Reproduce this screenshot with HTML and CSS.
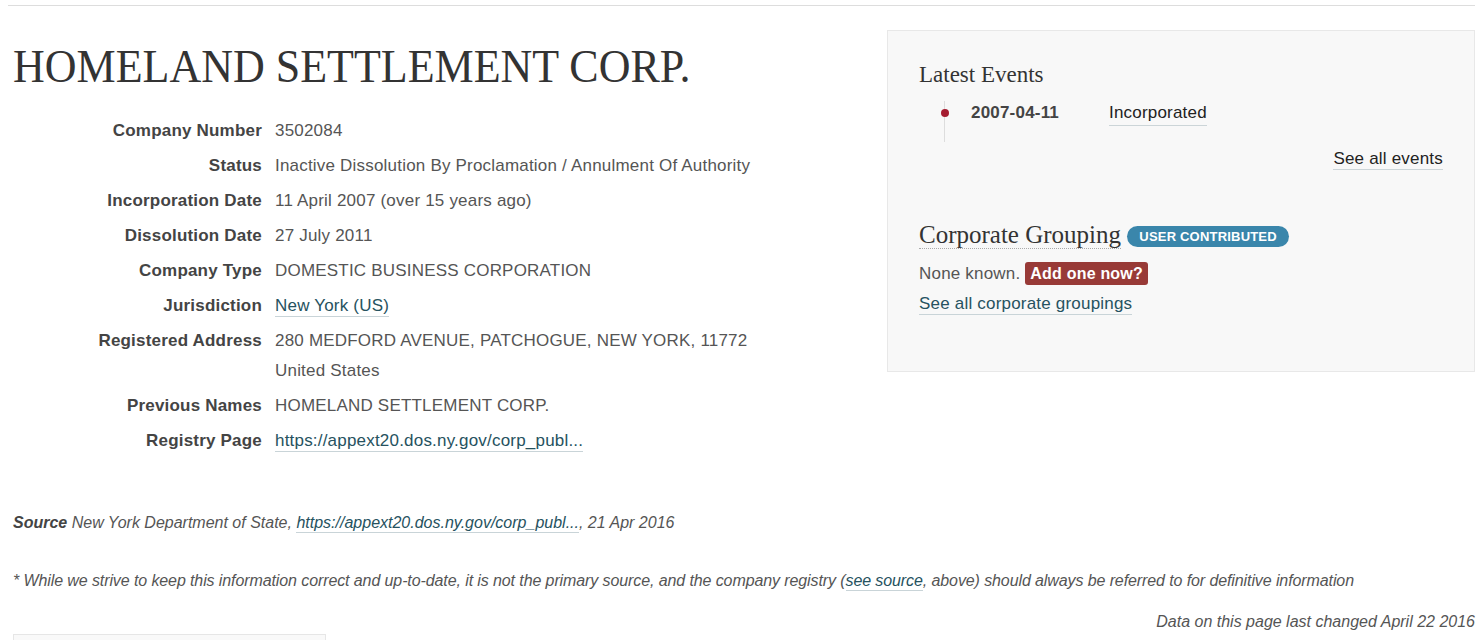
FILE: index.html
```html
<!DOCTYPE html>
<html>
<head>
<meta charset="utf-8">
<link rel="stylesheet" href="styles.css">
</head>
<body>
<div class="page">
  <div class="topbar"></div>
  <div class="main">
    <div class="left">
      <h1 class="title">HOMELAND SETTLEMENT CORP.</h1>
      <dl class="attrs">
        <dt>Company Number</dt><dd>3502084</dd>
        <dt>Status</dt><dd>Inactive Dissolution By Proclamation / Annulment Of Authority</dd>
        <dt>Incorporation Date</dt><dd>11 April 2007 (over 15 years ago)</dd>
        <dt>Dissolution Date</dt><dd>27 July 2011</dd>
        <dt>Company Type</dt><dd>DOMESTIC BUSINESS CORPORATION</dd>
        <dt>Jurisdiction</dt><dd><a class="lnk" href="#">New York (US)</a></dd>
        <dt>Registered Address</dt><dd>280 MEDFORD AVENUE, PATCHOGUE, NEW YORK, 11772<br>United States</dd>
        <dt>Previous Names</dt><dd>HOMELAND SETTLEMENT CORP.</dd>
        <dt>Registry Page</dt><dd><a class="lnk" href="#">https://appext20.dos.ny.gov/corp_publ...</a></dd>
      </dl>
    </div>
    <div class="sidebar">
      <h3 class="side-title">Latest Events</h3>
      <ul class="events">
        <li class="event"><span class="dot"></span><span class="ev-date">2007-04-11</span><a class="ev-desc" href="#">Incorporated</a></li>
      </ul>
      <div class="see-all"><a class="dark-lnk" href="#">See all events</a></div>
      <h3 class="side-title grouping"><span class="dotted">Corporate Grouping</span> <span class="badge-blue">USER CONTRIBUTED</span></h3>
      <p class="none">None known. <a class="badge-red" href="#">Add one now?</a></p>
      <p class="groupings"><a class="lnk" href="#">See all corporate groupings</a></p>
    </div>
  </div>
  <p class="source"><b>Source</b> New York Department of State, <a class="lnk" href="#">https://appext20.dos.ny.gov/corp_publ...</a>, 21 Apr 2016</p>
  <p class="disclaimer">* While we strive to keep this information correct and up-to-date, it is not the primary source, and the company registry (<a class="lnk" href="#">see source</a>, above) should always be referred to for definitive information</p>
  <p class="changed">Data on this page last changed April 22 2016</p>
  <div class="bottom-box"></div>
</div>
</body>
</html>
```

FILE: styles.css
```css
html, body {
  margin: 0;
  padding: 0;
  background: #fff;
}
body {
  font-family: "Liberation Sans", Arial, sans-serif;
  font-size: 17px;
  letter-spacing: 0.2px;
  color: #555;
  overflow: hidden;
  height: 640px;
}
.page {
  margin: 0 8px;
}
.topbar {
  height: 5px;
  border-bottom: 1px solid #ddd;
}
.main {
  display: flex;
  align-items: flex-start;
  justify-content: space-between;
}
.left {
  padding-left: 5px;
}
.title {
  font-family: "Liberation Serif", "Times New Roman", serif;
  font-weight: normal;
  font-size: 47px;
  line-height: 56px;
  letter-spacing: 0;
  white-space: nowrap;
  color: #333;
  margin: 32px 0 0 0;
  transform: scaleX(0.936);
  transform-origin: left center;
}
.attrs {
  display: grid;
  grid-template-columns: 249px auto;
  column-gap: 13px;
  row-gap: 5px;
  margin: 22px 0 0 0;
  line-height: 30px;
}
.attrs dt {
  text-align: right;
  font-weight: bold;
  color: #444;
}
.attrs dd {
  margin: 0;
  color: #555;
}
.lnk {
  color: #265260;
  text-decoration: none;
  border-bottom: 1px solid #c9d4d8;
  padding-bottom: 1px;
}
.dark-lnk {
  color: #222;
  text-decoration: none;
  border-bottom: 1px solid #ccd5d8;
  padding-bottom: 1px;
}
.sidebar {
  margin-top: 24px;
  width: 524px;
  height: 280px;
  padding: 30px 31px 30px 31px;
  background: #f8f8f8;
  border: 1px solid #e8e8e8;
}
.side-title {
  font-family: "Liberation Serif", "Times New Roman", serif;
  font-weight: normal;
  font-size: 23px;
  line-height: 28px;
  letter-spacing: 0;
  color: #333;
  margin: 0;
}
.events {
  list-style: none;
  margin: 12px 0 0 0;
  padding: 0 0 0 25px;
}
.event {
  display: flex;
  align-items: flex-start;
  position: relative;
  height: 41px;
}
.event::before {
  content: "";
  position: absolute;
  left: 0;
  top: 0;
  bottom: 0;
  width: 1px;
  background: #ddd;
}
.dot {
  position: relative;
  width: 8px;
  height: 8px;
  border-radius: 50%;
  background: #a51c30;
  margin-left: -3px;
  margin-top: 8px;
}
.ev-date {
  font-weight: bold;
  color: #444;
  margin-left: 22px;
  width: 138px;
  line-height: 24px;
}
.ev-desc {
  color: #222;
  text-decoration: none;
  border-bottom: 1px solid #ccd5d8;
  line-height: 24px;
}
.see-all {
  text-align: right;
  margin-top: 5px;
  line-height: 24px;
}
.grouping {
  margin-top: 49px;
  font-size: 25px;
  line-height: 30px;
}
.dotted {
  border-bottom: 1px dotted #aaa;
}
.badge-blue {
  display: inline-block;
  vertical-align: 2px;
  font-family: "Liberation Sans", Arial, sans-serif;
  font-weight: bold;
  font-size: 13px;
  line-height: 21px;
  letter-spacing: 0.2px;
  color: #fff;
  background: #3a86ab;
  border-radius: 11px;
  padding: 0 12px;
}
.none {
  margin: 11px 0 0 0;
  line-height: 26px;
}
.badge-red {
  display: inline-block;
  font-weight: bold;
  font-size: 16px;
  line-height: 23px;
  padding: 0 5px;
  color: #fff;
  background: #983a37;
  border-radius: 3px;
  text-decoration: none;
}
.groupings {
  margin: 4px 0 0 0;
  line-height: 26px;
}
.source {
  font-style: italic;
  font-size: 16px;
  letter-spacing: 0;
  line-height: 20px;
  margin: 57px 0 0 5px;
}
.source b {
  color: #444;
}
.disclaimer {
  font-style: italic;
  font-size: 16px;
  letter-spacing: -0.1px;
  line-height: 20px;
  margin: 38px 0 0 5px;
}
.changed {
  font-style: italic;
  font-size: 16px;
  letter-spacing: 0;
  line-height: 20px;
  text-align: right;
  margin: 21px 0 0 0;
}
.bottom-box {
  margin: 2px 0 0 5px;
  width: 311px;
  height: 5px;
  background: #f9f9f9;
  border: 1px solid #e6e6e6;
  border-bottom: 0;
}
```
